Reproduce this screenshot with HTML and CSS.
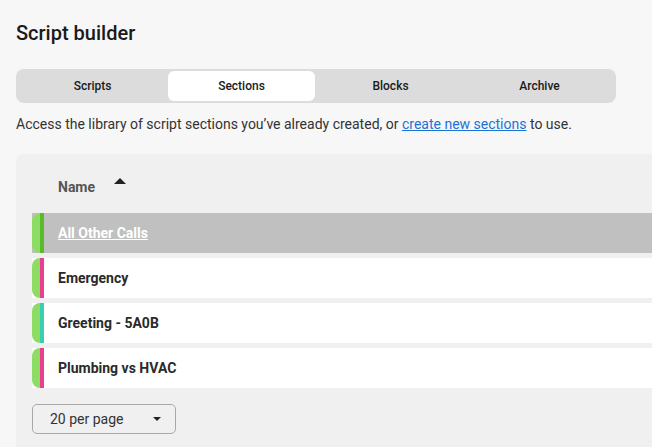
FILE: index.html
```html
<!DOCTYPE html>
<html>
<head>
<meta charset="utf-8">
<link rel="stylesheet" href="styles.css">
</head>
<body>
<div class="page">
  <h1 class="title">Script builder</h1>
  <div class="tabs">
    <div class="tab">Scripts</div>
    <div class="tab active">Sections</div>
    <div class="tab">Blocks</div>
    <div class="tab">Archive</div>
  </div>
  <p class="desc">Access the library of script sections you’ve already created, or <a href="#" class="link">create new sections</a> to use.</p>
  <div class="panel">
    <div class="head">
      <span class="head-name">Name</span>
      <svg class="sort" width="12" height="6" viewBox="0 0 12 6"><path d="M0 6 L6 0 L12 6 Z" fill="#222"/></svg>
    </div>
    <div class="rows">
      <div class="row selected">
        <span class="flag"></span><span class="stripe green"></span>
        <a href="#" class="row-name sel-link">All Other Calls</a>
      </div>
      <div class="row">
        <span class="flag"></span><span class="stripe pink"></span>
        <span class="row-name">Emergency</span>
      </div>
      <div class="row">
        <span class="flag"></span><span class="stripe teal"></span>
        <span class="row-name">Greeting - 5A0B</span>
      </div>
      <div class="row">
        <span class="flag"></span><span class="stripe pink"></span>
        <span class="row-name">Plumbing vs HVAC</span>
      </div>
    </div>
    <div class="pager">
      <div class="select">
        <span>20 per page</span>
        <svg width="8" height="4" viewBox="0 0 8 4"><path d="M0 0 L8 0 L4 4 Z" fill="#222"/></svg>
      </div>
    </div>
  </div>
</div>
</body>
</html>
```

FILE: styles.css
```css
* { box-sizing: border-box; }
html, body { margin: 0; padding: 0; }
body {
  background: #f7f7f7;
  font-family: Roboto, "Liberation Sans", sans-serif;
  color: #222;
  overflow: hidden;
  height: 447px;
}
.page {
  padding: 20px 0 0 16px;
}
.title {
  margin: 0;
  font-size: 20px;
  font-weight: 500;
  line-height: 26px;
  color: #1a1a1a;
}
.tabs {
  margin-top: 23px;
  width: 600px;
  height: 34px;
  background: #dcdcdc;
  border-radius: 8px;
  padding: 2px;
  display: grid;
  grid-template-columns: repeat(4, 1fr);
}
.tab {
  display: flex;
  align-items: center;
  justify-content: center;
  font-size: 12px;
  font-weight: 500;
  color: #1a1a1a;
  border-radius: 6px;
}
.tab.active {
  background: #fff;
  margin: 0 1px;
}
.desc {
  margin: 11px 0 0 0;
  font-size: 14px;
  line-height: 20px;
  color: #333;
}
.link {
  color: #1a73d9;
  text-decoration: underline;
}
.panel {
  margin-top: 20px;
  background: #f0f0f0;
  border-top-left-radius: 8px;
  padding: 0 0 0 16px;
  height: 300px;
}
.head {
  height: 59px;
  display: flex;
  align-items: center;
  padding-left: 26px;
}
.head-name {
  font-size: 14px;
  font-weight: 700;
  color: #555;
  width: 56px;
  padding-top: 6px;
}
.sort {
  margin-top: -6px;
}
.rows {
  display: flex;
  flex-direction: column;
  gap: 5px;
}
.row {
  height: 40px;
  background: #fff;
  display: flex;
  align-items: center;
}
.row.selected {
  background: #c0c0c0;
}
.flag {
  width: 8px;
  height: 40px;
  background: #8ddc64;
  border-radius: 8px 0 0 8px;
}
.stripe {
  width: 4px;
  height: 40px;
}
.stripe.green { background: #5bba2c; }
.stripe.pink { background: #ea3e8e; }
.stripe.teal { background: #3ccdb0; }
.row-name {
  margin-left: 14px;
  font-size: 14px;
  font-weight: 700;
  color: #2a2a2a;
}
.sel-link {
  color: #fff;
  text-decoration: underline;
}
.pager {
  padding-top: 16px;
}
.select {
  width: 144px;
  height: 30px;
  border: 1px solid #a8a8a8;
  border-radius: 5px;
  display: flex;
  align-items: center;
  justify-content: space-between;
  padding: 0 14px 0 17px;
  font-size: 14px;
  color: #333;
}
```
